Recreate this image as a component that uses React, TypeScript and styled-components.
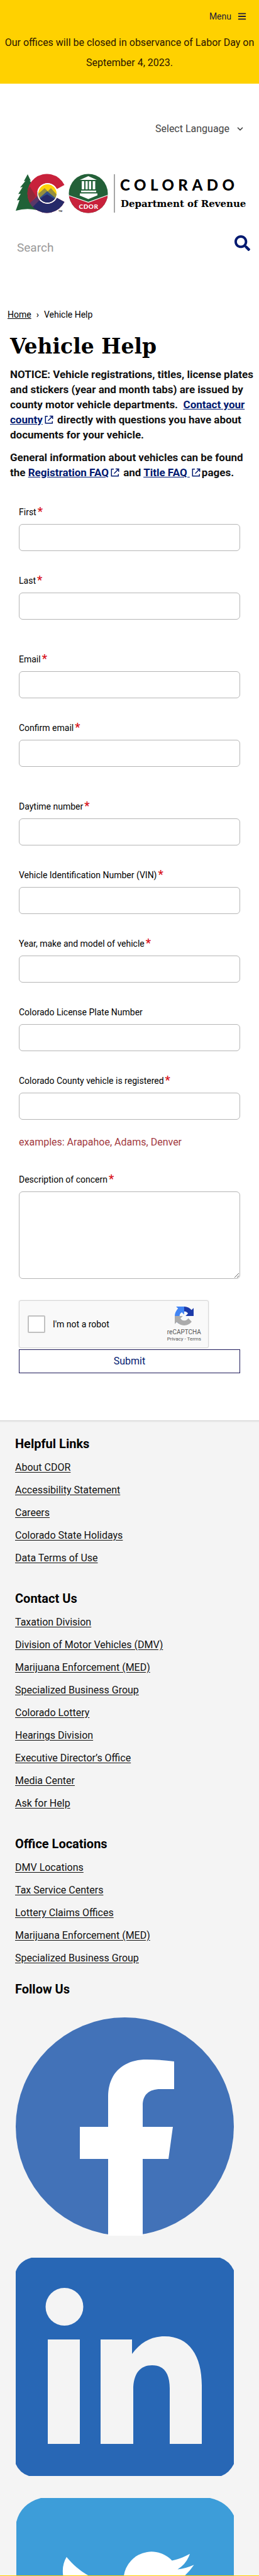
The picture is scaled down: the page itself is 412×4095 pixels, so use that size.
import React from "react";
import styled, { createGlobalStyle } from "styled-components";
import { FaBars, FaSearch } from "react-icons/fa";
import { FiChevronDown } from "react-icons/fi";

const navy = "#001970";
const gold = "#ffd100";

const GlobalStyle = createGlobalStyle`
  *, *::before, *::after { box-sizing: border-box; }
  body {
    margin: 0;
    background: #fff;
    color: #000;
    font: 400 16px/24px Roboto, "Open Sans", sans-serif;
  }
`;

/* ---------- header ---------- */

const TopBar = styled.div`
  background: ${gold};
  padding-bottom: 17px;
`;

const MenuRow = styled.div`
  display: flex;
  justify-content: flex-end;
  height: 52px;
  padding-right: 20px;
`;

const MenuButton = styled.button`
  display: flex;
  align-items: center;
  gap: 10px;
  padding: 0;
  border: 0;
  background: none;
  color: #1d1a3a;
  font: inherit;
  font-size: 14px;
`;

const Notice = styled.p`
  margin: 0;
  color: #2b1400;
  line-height: 32px;
  text-align: center;
`;

const LanguageRow = styled.div`
  display: flex;
  align-items: center;
  justify-content: flex-end;
  height: 144px;
  padding-right: 23px;
  color: #444;
`;

const LanguageSelect = styled.select`
  appearance: none;
  width: 128px;
  padding: 0;
  border: 0;
  background: none;
  color: inherit;
  font: inherit;
`;

const LogoLink = styled.a`
  display: block;
  margin: 0 24px;
  svg { display: block; width: 100%; overflow: visible; }
`;

const SearchForm = styled.form`
  display: flex;
  justify-content: space-between;
  align-items: flex-start;
  margin: 34px 14px 0 25px;
`;

const SearchInput = styled.input`
  flex: 1;
  min-width: 0;
  height: 40px;
  padding: 0 2px;
  border: 0;
  background: none;
  font: inherit;
  font-size: 19px;
  outline: none;
  &::placeholder { color: #999; opacity: 1; }
`;

const SearchButton = styled.button`
  padding: 1px 0 0;
  border: 0;
  background: none;
  color: ${navy};
  font-size: 25px;
  line-height: 25px;
  svg { display: block; }
`;

/* ---------- main content ---------- */

const Breadcrumb = styled.nav`
  display: flex;
  gap: 8px;
  margin: 75px 12px 0;
  font-size: 14px;
  a { color: inherit; }
`;

const Title = styled.h1`
  margin: 19px 16px 12px;
  font: 700 33px/40px "DejaVu Serif", "Roboto Slab", serif;
`;

const Paragraph = styled.p`
  margin: 0 8px 12px 16px;
  font-size: 17px;
  font-weight: 700;
  color: #111;
`;

const InlineLink = styled.a`
  color: ${navy};
  svg { margin: 0 2px 0 3px; vertical-align: -1px; }
`;

const HelpForm = styled.form`
  display: flex;
  flex-direction: column;
  padding: 29px 30px 75px;
`;

const Field = styled.div<{ $after?: number }>`
  display: flex;
  flex-direction: column;
  gap: 9px;
  margin-bottom: ${(p) => p.$after ?? 37}px;
`;

const Label = styled.label`
  font-size: 14px;
  line-height: 20px;
`;

const Required = styled.span`
  margin-left: 2px;
  color: #d8131c;
  font-size: 18px;
  font-weight: 700;
  line-height: 16px;
`;

const TextInput = styled.input`
  height: 43px;
  padding: 0 10px;
  border: 1px solid #b5b5b5;
  border-radius: 6px;
  background: #fff;
  font: inherit;
`;

const TextArea = styled.textarea`
  height: 139px;
  padding: 10px;
  border: 1px solid #b5b5b5;
  border-radius: 6px;
  background: #fff;
  font: inherit;
`;

const Hint = styled.p`
  margin: 15px 0 0;
  color: #a33a3f;
`;

const Captcha = styled.div`
  display: flex;
  align-items: center;
  width: 302px;
  max-width: 100%;
  height: 76px;
  margin-bottom: 2px;
  padding: 0 11px 0 13px;
  border: 1px solid #d6d6d6;
  border-radius: 3px;
  background: #f9f9f9;
  box-shadow: 0 0 3px 0 rgba(0, 0, 0, 0.1);
  label { flex: 1; font-size: 14px; }
`;

const CaptchaBox = styled.input`
  appearance: none;
  width: 28px;
  height: 28px;
  margin: 0 12px 0 0;
  border: 2px solid #c1c1c1;
  border-radius: 2px;
  background: #fff;
`;

const CaptchaBrand = styled.div`
  display: flex;
  flex-direction: column;
  align-items: center;
  color: #555;
  font-size: 10px;
  line-height: 12px;
  svg { margin-bottom: 5px; }
`;

const CaptchaLegal = styled.small`
  font-size: 8px;
  line-height: 10px;
  white-space: nowrap;
  a { color: inherit; text-decoration: none; }
`;

const Submit = styled.button`
  height: 38px;
  padding: 0;
  border: 1px solid #1e1a5a;
  background: #fff;
  color: ${navy};
  font: inherit;
`;

/* ---------- footer ---------- */

const Footer = styled.footer`
  padding: 21px 24px 0;
  border-top: 1px solid #d2d2d2;
  border-bottom: 1px solid ${gold};
  background: #f4f4f4;
  box-shadow: inset 0 2px 0 #ececec;
`;

const FooterHeading = styled.h2`
  margin: 0;
  font-size: 20px;
  font-weight: 700;
  line-height: 30px;
`;

const LinkList = styled.ul<{ $after?: number }>`
  margin: 5px 0 ${(p) => p.$after ?? 31}px;
  padding: 0;
  list-style: none;
  line-height: 36px;
  a { color: #111; text-underline-offset: 2px; }
`;

const SocialList = styled.div`
  display: flex;
  flex-direction: column;
  gap: 35px;
  margin: 30px 16px 0 1px;
  svg { display: block; width: 100%; }
`;

const ExternalIcon = () => (
  <svg width="14" height="14" viewBox="0 0 14 14" fill="none" stroke={navy} strokeWidth="1.5" aria-hidden="true">
    <path d="M5 1.7H1.3v11h11V9.500M8 1.500h4.700V6M12.500 1.700 5.500 8.700" />
  </svg>
);

const Logo = () => (
  <svg viewBox="0 0 364 62" role="img" aria-label="Colorado Department of Revenue">
    <defs>
      <clipPath id="cShape">
        <path d="M78.500 17A31 31 0 1 0 78.500 44L66.500 37.500A16.500 16.500 0 1 1 66.500 23.500Z" />
      </clipPath>
      <clipPath id="sun"><circle cx="51.500" cy="30.500" r="14.500" /></clipPath>
      <clipPath id="seal"><circle cx="116.500" cy="30.500" r="31" /></clipPath>
    </defs>
    <path d="M20 0 14 11l2.500-.5L8 21l4-.8L5 31.500l4-.5L3 41.500l4-.5L1 58q17-5 34-1L38 30 26 18l3-.5L23 10l2 .5Z" fill="#1f6137" />
    <g clipPath="url(#cShape)">
      <rect x="18" y="-1" width="64" height="64" fill="#c8213b" />
      <path d="M20 22 24 20 33 35 24 46 18 46Z" fill="#93293a" />
      <path d="M18 51 36 34 44 44 32 62H18Z" fill="#5a3768" />
      <path d="M26 54 38 42 52 46 66 37 82 30V63H26Z" fill="#262a69" />
    </g>
    <g clipPath="url(#sun)">
      <rect x="36" y="15" width="32" height="32" fill="#fdd20a" />
      <path d="M36 32 47 22 52 27 57 22 67 33V47H36Z" fill="#958f3e" />
      <path d="M36 40 51 27 67 40V47H36Z" fill="#31508a" />
      <path d="M36 43 45 35 51 32 59 37 67 42V47H36Z" fill="#262a69" />
    </g>
    <circle cx="51.500" cy="30.500" r="15.500" fill="none" stroke="#fff" strokeWidth="1.500" />
    <text x="69" y="60" fontSize="4" fontWeight="700" fill="#333">TM</text>
    <g clipPath="url(#seal)">
      <rect x="85" y="-1" width="64" height="64" fill="#236038" />
      <path d="M85 34 116.500 45 148 33.500V63H85Z" fill="#c8213b" />
    </g>
    <path d="M86 34 116.500 44.500 147 33.500" fill="none" stroke="#fff" strokeWidth="1.300" />
    <path d="M103 9 116.500 3 130 9ZM106 11h4v13h-4ZM112 11h3.500v13H112ZM117.500 11h3.500v13h-3.500ZM123.500 11h4v13h-4ZM105 26h24v2.500h-24ZM103 30.500h28v3l-14.500 6-14.500-6h1Z" fill="#fff" />
    <text x="117" y="55" textAnchor="middle" fontFamily="Lato, sans-serif" fontSize="10" fontWeight="900" fill="#fff" letterSpacing="0.500">CDOR</text>
    <path d="M158 0V61" stroke="#888" strokeWidth="1.500" />
    <text x="167" y="26" fontFamily="Lato, sans-serif" fontSize="24" fontWeight="900" letterSpacing="6.500">COLORADO</text>
    <text x="168" y="52" fontFamily="DejaVu Serif, serif" fontSize="15" fontWeight="700">Department of Revenue</text>
  </svg>
);

const CaptchaIcon = () => (
  <svg width="30" height="30" viewBox="0 0 64 64" aria-hidden="true">
    <path fill="#1c3aa9" d="M64 31.955l-.033-1.370V4.687l-7.160 7.160C50.948 4.674 42.033.093 32.050.093c-10.400 0-19.622 4.960-25.458 12.640l11.736 11.860a15.550 15.550 0 0 1 4.754-5.334c2.050-1.600 4.952-2.906 8.968-2.906.485 0 .860.057 1.135.163 4.976.393 9.288 3.140 11.828 7.124l-8.307 8.307L64 31.953" />
    <path fill="#4285f4" d="M31.862.094l-1.370.033H4.594l7.160 7.160C4.580 13.147 0 22.060 0 32.046c0 10.400 4.960 19.622 12.640 25.458L24.500 45.768a15.550 15.550 0 0 1-5.334-4.754c-1.600-2.050-2.906-4.952-2.906-8.968 0-.485.057-.860.163-1.135.393-4.976 3.140-9.288 7.124-11.828l8.307 8.307L31.860.095" />
    <path fill="#ababab" d="M.001 32.045l.033 1.370v25.898l7.160-7.160c5.860 7.173 14.774 11.754 24.760 11.754 10.400 0 19.622-4.960 25.458-12.640l-11.736-11.860a15.550 15.550 0 0 1-4.754 5.334c-2.050 1.600-4.952 2.906-8.968 2.906-.485 0-.860-.057-1.135-.163-4.976-.393-9.288-3.140-11.828-7.124l8.307-8.307c-10.522.040-22.400.066-27.295-.005" />
  </svg>
);

const FacebookLogo = () => (
  <svg viewBox="0 0 347 347" aria-hidden="true">
    <circle cx="173.500" cy="173.500" r="173.500" fill="#4272b8" />
    <path fill="#fff" d="M147 347V225H102V174H147V126C147 88 172 67 208 67Q230 67 252 70V114H230C212 114 202 123 202 140V174H250L243 225H202V347Z" />
  </svg>
);

const LinkedInLogo = () => (
  <svg viewBox="0 0 347 347" aria-hidden="true">
    <path fill="#2867b5" d="M25 0H325Q340 5 347 20V328Q340 342 327 347H21Q6 342 0 328V22Q6 5 25 0Z" />
    <circle cx="77.500" cy="78" r="30" fill="#f4f4f4" />
    <path fill="#f4f4f4" d="M51 130H102V296H51ZM135 130H185V153C199 134 216 125 237 125C276 125 296 156 296 203V296H245V208C245 184 236 171 217 171C198 171 187 184 187 210V296H135Z" />
  </svg>
);

/* Only the upper part of the tile shows above the footer's gold edge. */
const TwitterLogo = () => (
  <svg viewBox="0 0 347 123" aria-hidden="true">
    <path fill="#3d9dd9" d="M40 0H309Q336 6 347 28V319Q336 341 309 347H40Q8 338 1 308V38Q8 9 40 0Z" />
    <path transform="translate(66 65) scale(9.060)" fill="#fff" d="M23.953 4.570a10 10 0 01-2.825.775 4.958 4.958 0 002.163-2.723c-.951.555-2.005.959-3.127 1.184a4.920 4.920 0 00-8.384 4.482C7.690 8.095 4.067 6.130 1.640 3.162a4.822 4.822 0 00-.666 2.475c0 1.710.870 3.213 2.188 4.096a4.904 4.904 0 01-2.228-.616v.060a4.923 4.923 0 003.946 4.827 4.996 4.996 0 01-2.212.085 4.936 4.936 0 004.604 3.417 9.867 9.867 0 01-6.102 2.105c-.390 0-.779-.023-1.170-.067a13.995 13.995 0 007.557 2.209c9.053 0 13.998-7.496 13.998-13.985 0-.210 0-.420-.015-.630A9.935 9.935 0 0024 4.590z" />
  </svg>
);

type FieldSpec = { id: string; label: string; type?: string; optional?: boolean; hint?: string; after?: number };

const fields: FieldSpec[] = [
  { id: "first", label: "First" },
  { id: "last", label: "Last", after: 53 },
  { id: "email", label: "Email", type: "email" },
  { id: "confirm", label: "Confirm email", type: "email", after: 53 },
  { id: "phone", label: "Daytime number", type: "tel" },
  { id: "vin", label: "Vehicle Identification Number (VIN)" },
  { id: "model", label: "Year, make and model of vehicle" },
  { id: "plate", label: "Colorado License Plate Number", optional: true },
  { id: "county", label: "Colorado County vehicle is registered", hint: "examples: Arapahoe, Adams, Denver" },
];

const footerGroups = [
  {
    title: "Helpful Links",
    links: ["About CDOR", "Accessibility Statement", "Careers", "Colorado State Holidays", "Data Terms of Use"],
  },
  {
    title: "Contact Us",
    links: [
      "Taxation Division",
      "Division of Motor Vehicles (DMV)",
      "Marijuana Enforcement (MED)",
      "Specialized Business Group",
      "Colorado Lottery",
      "Hearings Division",
      "Executive Director’s Office",
      "Media Center",
      "Ask for Help",
    ],
  },
  {
    title: "Office Locations",
    after: 16,
    links: [
      "DMV Locations",
      "Tax Service Centers",
      "Lottery Claims Offices",
      "Marijuana Enforcement (MED)",
      "Specialized Business Group",
    ],
  },
];

export default function App() {
  return (
    <>
      <GlobalStyle />
      <header>
        <TopBar>
          <MenuRow>
            <MenuButton type="button">
              Menu <FaBars size={14} />
            </MenuButton>
          </MenuRow>
          <Notice>Our offices will be closed in observance of Labor Day on September 4, 2023.</Notice>
        </TopBar>
        <LanguageRow>
          <LanguageSelect aria-label="Select Language">
            <option>Select Language</option>
          </LanguageSelect>
          <FiChevronDown size={14} strokeWidth={3} />
        </LanguageRow>
        <LogoLink href="#home">
          <Logo />
        </LogoLink>
        <SearchForm role="search">
          <SearchInput type="search" placeholder="Search" aria-label="Search" />
          <SearchButton type="button" aria-label="Search">
            <FaSearch />
          </SearchButton>
        </SearchForm>
      </header>

      <main>
        <Breadcrumb aria-label="Breadcrumb">
          <a href="#home">Home</a>
          <span>›</span>
          <span>Vehicle Help</span>
        </Breadcrumb>
        <Title>Vehicle Help</Title>
        <Paragraph>
          NOTICE: Vehicle registrations, titles, license plates and stickers (year and month tabs) are issued by county
          motor vehicle departments.&nbsp;{" "}
          <InlineLink href="#county">
            Contact your county
            <ExternalIcon />
          </InlineLink>{" "}
          directly with questions you have about documents for your vehicle.
        </Paragraph>
        <Paragraph>
          General information about vehicles can be found the{" "}
          <InlineLink href="#registration">
            Registration FAQ
            <ExternalIcon />
          </InlineLink>{" "}
          and{" "}
          <InlineLink href="#title">
            Title FAQ&nbsp;
            <ExternalIcon />
          </InlineLink>
          pages.
        </Paragraph>

        <HelpForm>
          {fields.map((f) => (
            <Field key={f.id} $after={f.after}>
              <Label htmlFor={f.id}>
                {f.label}
                {!f.optional && <Required>*</Required>}
              </Label>
              <TextInput id={f.id} type={f.type ?? "text"} />
              {f.hint && <Hint>{f.hint}</Hint>}
            </Field>
          ))}
          <Field $after={34}>
            <Label htmlFor="concern">
              Description of concern
              <Required>*</Required>
            </Label>
            <TextArea id="concern" />
          </Field>
          <Captcha>
            <CaptchaBox id="robot" type="checkbox" />
            <label htmlFor="robot">I'm not a robot</label>
            <CaptchaBrand>
              <CaptchaIcon />
              reCAPTCHA
              <CaptchaLegal>
                <a href="#privacy">Privacy</a> - <a href="#terms">Terms</a>
              </CaptchaLegal>
            </CaptchaBrand>
          </Captcha>
          <Submit type="button">Submit</Submit>
        </HelpForm>
      </main>

      <Footer>
        {footerGroups.map((g) => (
          <section key={g.title}>
            <FooterHeading>{g.title}</FooterHeading>
            <LinkList $after={g.after}>
              {g.links.map((l) => (
                <li key={l}>
                  <a href="#footer">{l}</a>
                </li>
              ))}
            </LinkList>
          </section>
        ))}
        <FooterHeading>Follow Us</FooterHeading>
        <SocialList>
          <a href="#facebook" aria-label="Facebook">
            <FacebookLogo />
          </a>
          <a href="#linkedin" aria-label="LinkedIn">
            <LinkedInLogo />
          </a>
          <a href="#twitter" aria-label="Twitter">
            <TwitterLogo />
          </a>
        </SocialList>
      </Footer>
    </>
  );
}
